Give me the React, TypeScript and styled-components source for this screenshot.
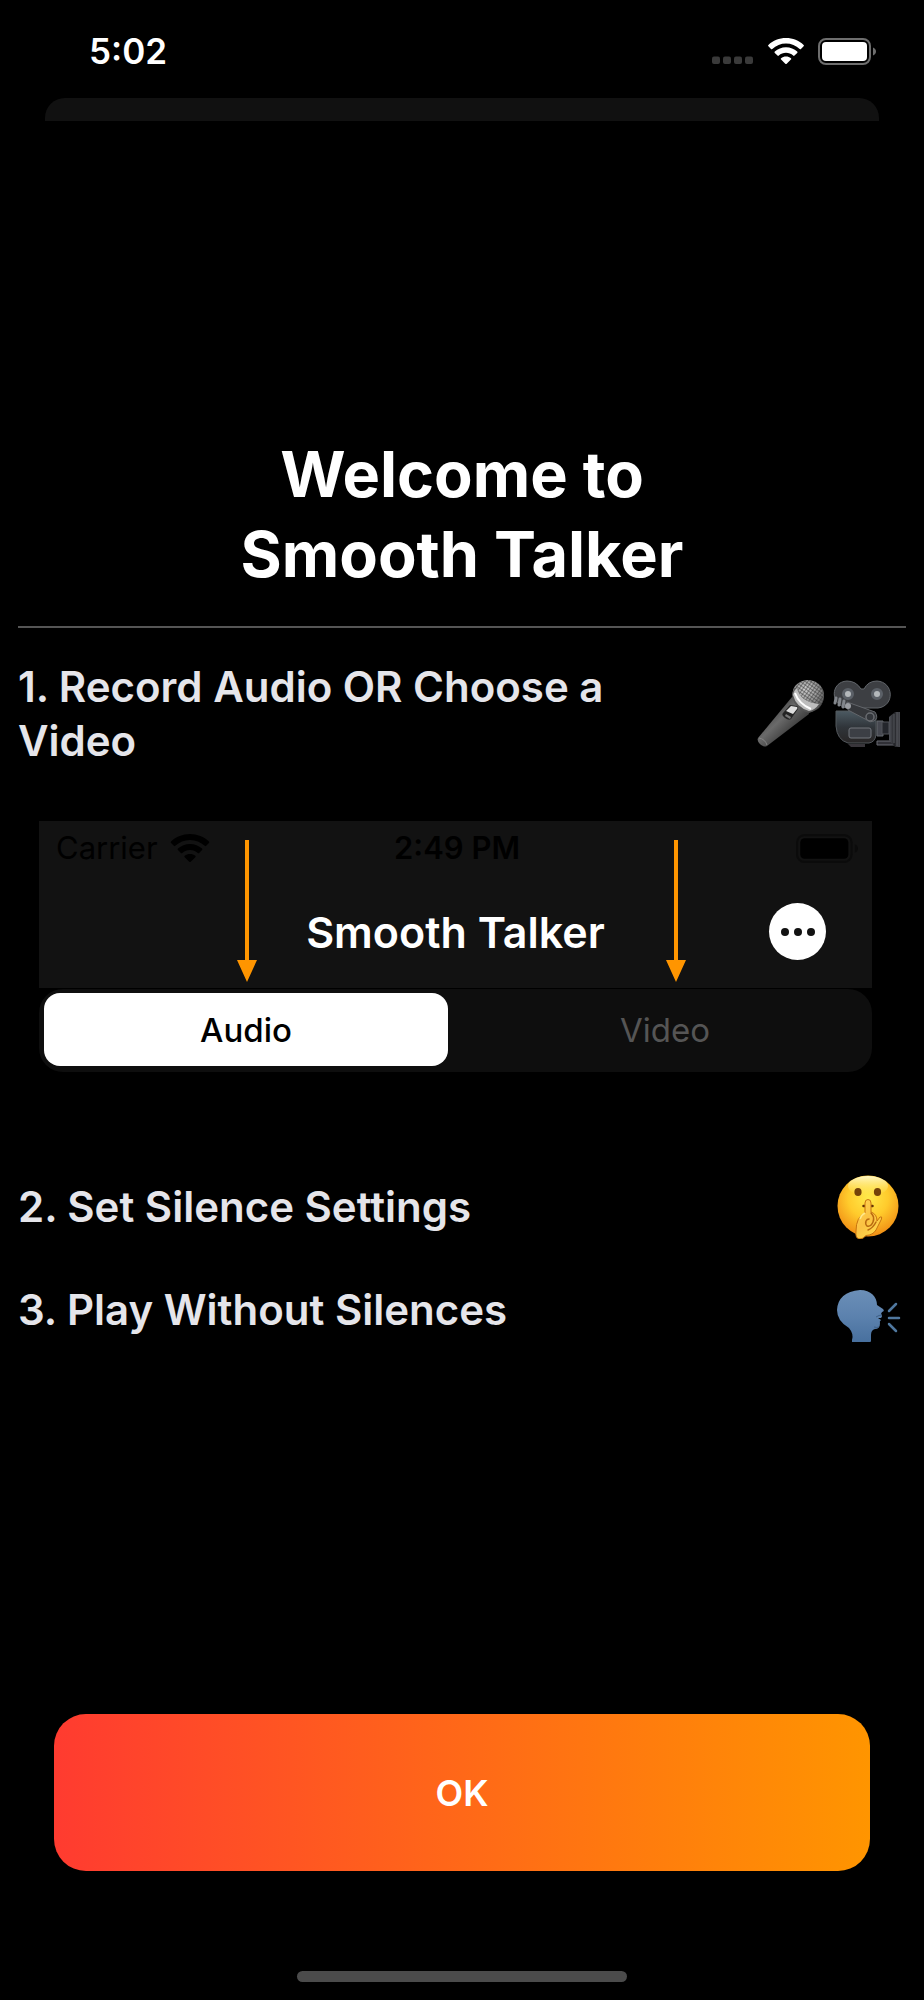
import React, { useState } from "react";
import styled, { createGlobalStyle } from "styled-components";

const GlobalStyle = createGlobalStyle`
  * { box-sizing: border-box; }
  body {
    margin: 0;
    background: #000;
    color: #fff;
    font-family: Inter, "Liberation Sans", sans-serif;
  }
  h1, h2, p, ol { margin: 0; padding: 0; }
`;

const Screen = styled.div`
  display: flex;
  flex-direction: column;
  min-height: 100vh;
`;

const StatusBar = styled.header`
  display: flex;
  justify-content: space-between;
  align-items: center;
  height: 98px;
  padding: 4px 48px 0 89px;
`;

const Clock = styled.time`
  font-size: 35px;
  line-height: 40px;
  font-weight: 600;
`;

const StatusIcons = styled.div`
  display: flex;
  align-items: center;
  gap: 14px;
`;

const SheetBehind = styled.div`
  height: 23px;
  margin: 0 45px;
  border-radius: 20px 20px 0 0;
  background: #111;
`;

const Sheet = styled.main`
  display: flex;
  flex: 1;
  flex-direction: column;
  padding: 313px 18px 0;
`;

const Title = styled.h1`
  padding-bottom: 32px;
  border-bottom: 2px solid #555;
  font-size: 63px;
  line-height: 80px;
  font-weight: 700;
  text-align: center;
`;

const Steps = styled.ol`
  display: flex;
  flex-direction: column;
  padding-top: 32px;
  list-style: none;
`;

const Step = styled.li<{ $gap?: number }>`
  display: flex;
  justify-content: space-between;
  align-items: center;
  margin-bottom: ${(p) => p.$gap ?? 0}px;
`;

const StepText = styled.p`
  max-width: 620px;
  color: #e5e5ea;
  font-size: 42px;
  line-height: 54px;
  font-weight: 600;
`;

const StepIcons = styled.span`
  display: flex;
  gap: 8px;
  height: 54px;
  align-items: center;
  padding-right: 5px;
`;

const Preview = styled.li`
  position: relative;
  margin: 0 34px 108px 21px;
`;

const PreviewTop = styled.div`
  height: 167px;
  background: #121212;
`;

const PreviewStatus = styled.div`
  display: grid;
  grid-template-columns: 1fr auto 1fr;
  align-items: center;
  height: 54px;
  padding: 0 14px 0 17px;
  color: #000;
  font-size: 31px;
  line-height: 40px;
`;

const Carrier = styled.span`
  display: flex;
  align-items: center;
  gap: 12px;
`;

const PreviewTime = styled.span`
  font-weight: 600;
`;

const PreviewBattery = styled.span`
  display: flex;
  justify-content: flex-end;
`;

const PreviewNav = styled.div`
  display: grid;
  grid-template-columns: 1fr auto 1fr;
  align-items: center;
  height: 113px;
  padding: 0 46px;
`;

const PreviewTitle = styled.h2`
  grid-column: 2;
  font-size: 43px;
  line-height: 54px;
  font-weight: 600;
`;

const MoreButton = styled.button`
  display: flex;
  justify-self: end;
  align-items: center;
  justify-content: center;
  gap: 5px;
  width: 57px;
  height: 57px;
  padding: 0;
  border: 0;
  border-radius: 50%;
  background: #fff;
`;

const Dot = styled.span`
  width: 8px;
  height: 8px;
  border-radius: 50%;
  background: #121212;
`;

const Segments = styled.div`
  display: flex;
  gap: 15px;
  margin-top: 1px;
  padding: 4px 5px 6px;
  border-radius: 24px;
  background: #0e0e0e;
`;

const Segment = styled.button<{ $active: boolean }>`
  flex: 1;
  height: 73px;
  padding: 0;
  border: 0;
  border-radius: 16px;
  background: ${(p) => (p.$active ? "#fff" : "transparent")};
  color: ${(p) => (p.$active ? "#000" : "#555")};
  font-family: inherit;
  font-size: 33px;
  line-height: 40px;
  font-weight: ${(p) => (p.$active ? 500 : 400)};
`;

const ArrowMark = styled.svg<{ $at: string }>`
  position: absolute;
  top: 19px;
  left: ${(p) => p.$at};
  margin-left: -10px;
`;

const OkButton = styled.button`
  height: 157px;
  margin: auto 36px 0;
  border: 0;
  border-radius: 32px;
  background: linear-gradient(90deg, #ff3b30, #ff9500);
  color: #fff;
  font-family: inherit;
  font-size: 36px;
  line-height: 54px;
  font-weight: 600;
`;

const HomeIndicator = styled.div`
  width: 330px;
  height: 11px;
  margin: 100px auto 18px;
  border-radius: 6px;
  background: #4b4b4b;
`;

const SignalDots = () => (
  <svg width="42" height="27" viewBox="0 0 42 27" aria-hidden="true">
    {[0, 11, 22, 33].map((x) => (
      <rect key={x} x={x} y="18.500" width="8" height="7.500" rx="2" fill="#3a3a3a" />
    ))}
  </svg>
);

const Wifi = ({ width, height }: { width: number; height: number }) => (
  <svg width={width} height={height} viewBox="0 0 36 26" aria-hidden="true" fill="currentColor">
    <path d="M18 0C24.8 0 31 2.6 35.6 6.9q.7.7 0 1.4L33 11q-.6.6-1.300 0C28 7.500 23.200 5.500 18 5.500S8 7.500 4.300 11q-.7.600-1.300 0L.4 8.300q-.7-.7 0-1.400C5 2.600 11.200 0 18 0Z" />
    <path d="M18 9.200c4.300 0 8.200 1.600 11.200 4.300q.7.700 0 1.400l-2.700 2.700q-.6.600-1.300 0C23.200 15.800 20.700 14.800 18 14.800s-5.200 1-7.200 2.800q-.7.600-1.300 0l-2.700-2.700q-.7-.7 0-1.400C9.800 10.800 13.700 9.200 18 9.200Z" />
    <path d="M18 18.500c1.900 0 3.600.6 4.900 1.700q.7.700 0 1.300l-4.200 4.200q-.7.600-1.400 0l-4.200-4.200q-.7-.6 0-1.300C14.400 19.100 16.100 18.500 18 18.500Z" />
  </svg>
);

const Battery = ({ width, height, outline }: { width: number; height: number; outline: string }) => (
  <svg width={width} height={height} viewBox="0 0 58 27" aria-hidden="true">
    <rect x="1" y="1" width="51" height="25" rx="7" fill="none" stroke={outline} strokeWidth="2" />
    <rect x="4" y="4" width="45" height="19" rx="4" fill="currentColor" />
    <path d="M55 9.500c4 1.500 4 6.500 0 8Z" fill={outline} />
  </svg>
);

const Arrow = ({ at }: { at: string }) => (
  <ArrowMark $at={at} width="20" height="142" viewBox="0 0 20 142" aria-hidden="true">
    <path d="M8 0h4v120h8L10 142 0 120h8Z" fill="#ff9500" />
  </ArrowMark>
);

const Microphone = () => (
  <svg width="68" height="68" viewBox="0 0 68 68" role="img" aria-label="Microphone">
    <defs>
      <linearGradient id="micBody" x1="0" y1="0" x2="1" y2="1">
        <stop offset="0.2" stopColor="#3c3c3c" />
        <stop offset="0.45" stopColor="#6a6a6a" />
        <stop offset="0.75" stopColor="#303030" />
      </linearGradient>
      <radialGradient id="micHead" cx="0.4" cy="0.3" r="0.75">
        <stop offset="0" stopColor="#d0d0d0" />
        <stop offset="0.6" stopColor="#8c8c8c" />
        <stop offset="1" stopColor="#4a4a4a" />
      </radialGradient>
      <pattern id="micMesh" width="3" height="3" patternUnits="userSpaceOnUse" patternTransform="rotate(35)">
        <path d="M0 0h3M0 0v3" stroke="#333" strokeWidth="1" />
      </pattern>
    </defs>
    <path d="M1 58 35 17Q49 20 52 34L10 66Q6 68 2 63Q0 60 1 58Z" fill="url(#micBody)" />
    <path d="M2 58Q8 59 10 65" fill="none" stroke="#858585" strokeWidth="1" />
    <path d="M36 16C34 5 44 0 52 0C61 1 68 8 67 17C66 25 61 31 53 32Z" fill="url(#micHead)" />
    <path d="M36 16C34 5 44 0 52 0C61 1 68 8 67 17C66 25 61 31 53 32Z" fill="url(#micMesh)" />
    <path d="M35 14Q36 9 40 7Q42 22 63 24Q59 31 52 33Q36 29 35 14Z" fill="#555" />
    <path d="M36 15Q37 10 40 8Q43 22 62 24Q58 30 52 31Q39 27 36 15Z" fill="#bdbdbd" />
    <path d="M38 13Q42 24 54 29" fill="none" stroke="#fff" strokeWidth="2" />
    <path d="m33 25 7 1q2 1 1 3l-7 10q-2 2-6-1-4-3-2-5Z" fill="#242424" />
    <path d="m34 26 6 1q1 1 0 2l-4 5-7-3Z" fill="#ddd" />
    <path d="m29 34 5 3-1 2-5-3Z" fill="#777" />
  </svg>
);

const MovieCamera = () => (
  <svg width="68" height="68" viewBox="0 0 68 68" role="img" aria-label="Movie camera">
    <defs>
      <linearGradient id="camBody" x1="0" y1="0" x2="0" y2="1">
        <stop offset="0" stopColor="#4c5a62" />
        <stop offset="0.5" stopColor="#30353a" />
        <stop offset="1" stopColor="#292626" />
      </linearGradient>
      <linearGradient id="camHood" x1="0" y1="0" x2="1" y2="0">
        <stop offset="0" stopColor="#505259" />
        <stop offset="0.5" stopColor="#25262a" />
        <stop offset="1" stopColor="#494a50" />
      </linearGradient>
    </defs>
    <path d="M44 61h19v4H44Z" fill="#303036" stroke="#686b73" />
    <path d="M14 1q9 0 14 8h3Q35 1 44 1c17 1 18 25 1 27H14C-3 25-3 2 14 1Z" fill="#3d3f43" stroke="#62666b" />
    <path d="M3 31h33q6 1 7 8v16q-1 7-7 8H15Q4 60 3 46Z" fill="url(#camBody)" stroke="#53585d" />
    <path d="M15 64h17v3H18Z" fill="#39363b" />
    <path d="m14 22 28 10q4 6-1 9-4 2-7-1L15 30Z" fill="#35373b" stroke="#62656a" />
    <g stroke="#81858b" strokeWidth="3" strokeLinecap="round">
      <path d="m3 18-1 5M7 19l-1 6M11 21l-1 6" />
    </g>
    <circle cx="15" cy="26" r="3" fill="#9a9da2" />
    <circle cx="37" cy="37" r="4" fill="#33363b" stroke="#686b70" strokeWidth="1.500" />
    <g fill="#b4b8bb" stroke="#5b6067" strokeWidth="3">
      <circle cx="15" cy="14" r="4.500" />
      <circle cx="44" cy="14" r="4.500" />
    </g>
    <rect x="16" y="48" width="22" height="10" rx="2" fill="#3c3f45" stroke="#73777d" />
    <path d="M44 41h6v15h-6Z" fill="#464850" stroke="#65686e" />
    <path d="M49 42h7v12h-7Z" fill="#24262c" stroke="#505359" />
    <path d="m56 37 6-5h5v35h-5l-6-7Z" fill="url(#camHood)" />
    <path d="M61 34v29M64 32v34" stroke="#56585e" strokeWidth="1" />
  </svg>
);

const ShushingFace = () => (
  <svg width="64" height="64" viewBox="0 0 64 64" role="img" aria-label="Shushing face">
    <defs>
      <radialGradient id="face" cx="0.5" cy="0.36" r="0.66">
        <stop offset="0" stopColor="#ffe94a" />
        <stop offset="0.5" stopColor="#ffcb2c" />
        <stop offset="1" stopColor="#f08a13" />
      </radialGradient>
      <linearGradient id="faceShine" x1="0" y1="0" x2="0" y2="1">
        <stop offset="0" stopColor="#fffbd0" stopOpacity="0.95" />
        <stop offset="1" stopColor="#ffee66" stopOpacity="0" />
      </linearGradient>
      <linearGradient id="hand" x1="0" y1="0" x2="0.6" y2="1">
        <stop offset="0" stopColor="#ffd352" />
        <stop offset="0.6" stopColor="#fbc243" />
        <stop offset="1" stopColor="#ffd84a" />
      </linearGradient>
    </defs>
    <circle cx="31" cy="31" r="30.500" fill="url(#face)" />
    <ellipse cx="31" cy="11" rx="20" ry="10" fill="url(#faceShine)" />
    <ellipse cx="21" cy="17" rx="3.600" ry="4" fill="#744209" />
    <ellipse cx="40.500" cy="17" rx="3.600" ry="4" fill="#744209" />
    <path d="M26.500 31h9" stroke="#633307" strokeWidth="2.500" strokeLinecap="round" />
    <path
      d="M28 38V28q0-3.500 3-3.500t3 3.500v9q6 2 6 9l3-4q2.500-1 1.500 2L39 55q-3 5-10 5.500-3 3.500-6 3.500-5 0-4-8 0-14 9-18Z"
      fill="url(#hand)"
      stroke="#c8740f"
      strokeWidth="1"
    />
    <path d="M28 38q-4 2-5 6" fill="none" stroke="#ffe98a" strokeWidth="1.500" />
    <path d="M34 38q4 4 2 9-2 5-6 4-2-2-1-5 1-2 3-2M39 47q-3 6-8 8" fill="none" stroke="#b96a10" strokeWidth="1.500" strokeLinecap="round" />
  </svg>
);

const SpeakingHead = () => (
  <svg width="64" height="64" viewBox="0 0 64 64" role="img" aria-label="Speaking head">
    <defs>
      <linearGradient id="head" x1="0" y1="0" x2="0" y2="1">
        <stop offset="0" stopColor="#6b8fb7" />
        <stop offset="0.5" stopColor="#5c82ae" />
        <stop offset="1" stopColor="#48709e" />
      </linearGradient>
    </defs>
    <path
      d="M23 12C34 12 40 19 40 27q3 2 6 4 2 2-1 3l-1 2q2 2 0 4h-3l3 2q-2 2-1 3 0 6-5 6-4 1-4 6v6q0 1-1 1H15V62Q17 56 12 50 0 43 0 32 1 14 23 12Z"
      fill="url(#head)"
    />
    <path d="M39 39q3-2 6-2M37 49q3 1 5 0" fill="none" stroke="#3e6087" strokeWidth="1" />
    <path d="m52 33 7-7M52 40h10M52 46l7 7" stroke="#50789f" strokeWidth="2.500" strokeLinecap="round" />
  </svg>
);

const modes = ["Audio", "Video"];

export default function App() {
  const [mode, setMode] = useState("Audio");
  return (
    <Screen>
      <GlobalStyle />
      <StatusBar>
        <Clock>5:02</Clock>
        <StatusIcons>
          <SignalDots />
          <Wifi width={36} height={26} />
          <Battery width={58} height={27} outline="#6e6e6e" />
        </StatusIcons>
      </StatusBar>
      <SheetBehind />
      <Sheet>
        <Title>
          Welcome to
          <br />
          Smooth Talker
        </Title>
        <Steps>
          <Step $gap={53}>
            <StepText>1. Record Audio OR Choose a Video</StepText>
            <StepIcons>
              <Microphone />
              <MovieCamera />
            </StepIcons>
          </Step>
          <Preview>
            <PreviewTop>
              <PreviewStatus>
                <Carrier>
                  Carrier
                  <Wifi width={40} height={28} />
                </Carrier>
                <PreviewTime>2:49 PM</PreviewTime>
                <PreviewBattery>
                  <Battery width={62} height={29} outline="#0b0b0b" />
                </PreviewBattery>
              </PreviewStatus>
              <PreviewNav>
                <PreviewTitle>Smooth Talker</PreviewTitle>
                <MoreButton type="button" aria-label="More">
                  <Dot />
                  <Dot />
                  <Dot />
                </MoreButton>
              </PreviewNav>
            </PreviewTop>
            <Segments>
              {modes.map((name) => (
                <Segment
                  key={name}
                  type="button"
                  $active={mode === name}
                  aria-pressed={mode === name}
                  onClick={() => setMode(name)}
                >
                  {name}
                </Segment>
              ))}
            </Segments>
            <Arrow at="25%" />
            <Arrow at="76.5%" />
          </Preview>
          <Step $gap={49}>
            <StepText>2. Set Silence Settings</StepText>
            <StepIcons>
              <ShushingFace />
            </StepIcons>
          </Step>
          <Step>
            <StepText>3. Play Without Silences</StepText>
            <StepIcons>
              <SpeakingHead />
            </StepIcons>
          </Step>
        </Steps>
        <OkButton type="button">OK</OkButton>
      </Sheet>
      <HomeIndicator />
    </Screen>
  );
}
